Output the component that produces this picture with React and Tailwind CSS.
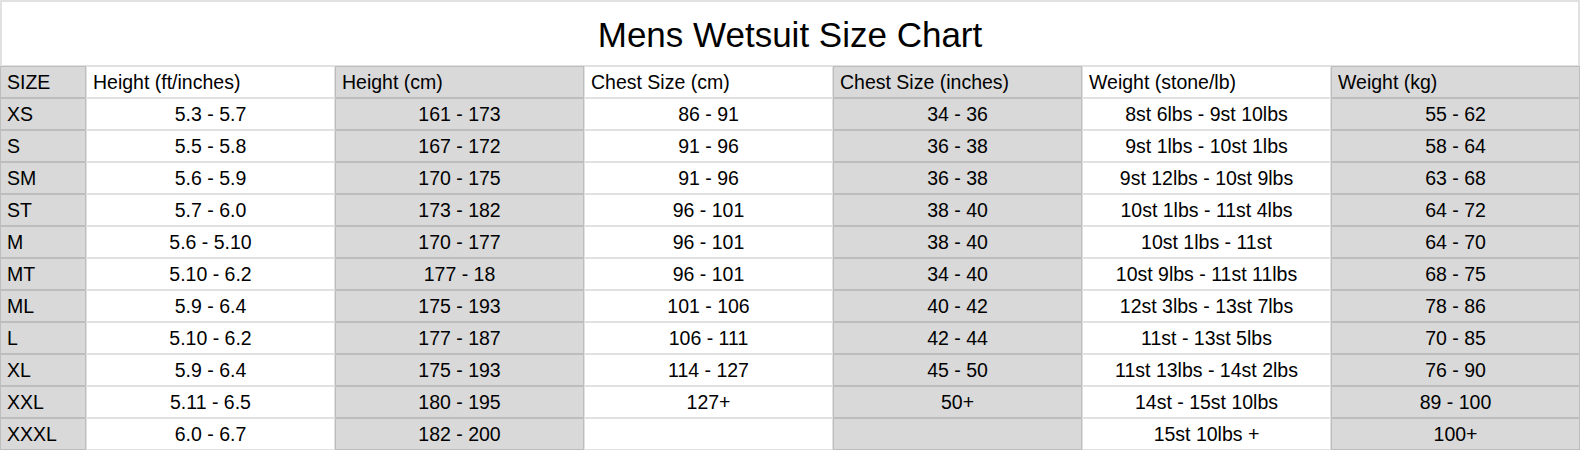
const headers = [
  'SIZE',
  'Height (ft/inches)',
  'Height (cm)',
  'Chest Size (cm)',
  'Chest Size (inches)',
  'Weight (stone/lb)',
  'Weight (kg)',
];

const rows = [
  ['XS', '5.3 - 5.7', '161 - 173', '86 - 91', '34 - 36', '8st 6lbs - 9st 10lbs', '55 - 62'],
  ['S', '5.5 - 5.8', '167 - 172', '91 - 96', '36 - 38', '9st 1lbs - 10st 1lbs', '58 - 64'],
  ['SM', '5.6 - 5.9', '170 - 175', '91 - 96', '36 - 38', '9st 12lbs - 10st 9lbs', '63 - 68'],
  ['ST', '5.7 - 6.0', '173 - 182', '96 - 101', '38 - 40', '10st 1lbs - 11st 4lbs', '64 - 72'],
  ['M', '5.6 - 5.10', '170 - 177', '96 - 101', '38 - 40', '10st 1lbs - 11st', '64 - 70'],
  ['MT', '5.10 - 6.2', '177 - 18', '96 - 101', '34 - 40', '10st 9lbs - 11st 11lbs', '68 - 75'],
  ['ML', '5.9 - 6.4', '175 - 193', '101 - 106', '40 - 42', '12st 3lbs - 13st 7lbs', '78 - 86'],
  ['L', '5.10 - 6.2', '177 - 187', '106 - 111', '42 - 44', '11st - 13st 5lbs', '70 - 85'],
  ['XL', '5.9 - 6.4', '175 - 193', '114 - 127', '45 - 50', '11st 13lbs - 14st 2lbs', '76 - 90'],
  ['XXL', '5.11 - 6.5', '180 - 195', '127+', '50+', '14st - 15st 10lbs', '89 - 100'],
  ['XXXL', '6.0 - 6.7', '182 - 200', '', '', '15st 10lbs +', '100+'],
];

function Cell({ col, header, children }) {
  const gray = col % 2 === 0;
  const tone = gray ? 'bg-[#d9d9d9] border-[#bdbdbd]' : 'bg-white border-[#e1e1e1]';
  const align = header || col === 0 ? 'justify-start pl-[6px]' : 'justify-center';
  return (
    <div className={`h-[32px] border flex items-center pt-[2px] ${tone} ${align}`}>
      {children}
    </div>
  );
}

export default function App() {
  return (
    <div
      className="w-[1580px] h-[450px] bg-white text-black text-[19.5px] leading-none"
      style={{ fontFamily: '"Liberation Sans", Arial, sans-serif' }}
    >
      <div className="grid grid-cols-[86px_repeat(6,1fr)]">
        <div className="col-span-7 h-[66px] border-2 border-b border-[#e1e1e1] flex items-center justify-center text-[35px] pt-[2px]">
          Mens Wetsuit Size Chart
        </div>
        {headers.map((h, i) => (
          <Cell key={h} col={i} header>
            {h}
          </Cell>
        ))}
        {rows.map((r) =>
          r.map((v, i) => (
            <Cell key={r[0] + i} col={i}>
              {v}
            </Cell>
          ))
        )}
      </div>
    </div>
  );
}
